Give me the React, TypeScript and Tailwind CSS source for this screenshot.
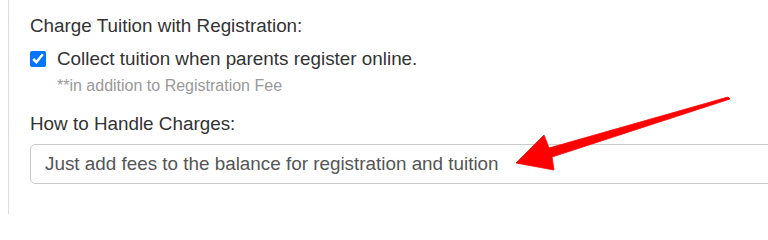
const App = () => {
  return (
    <div className="relative h-[214px] w-[768px] overflow-hidden bg-white font-['Liberation_Sans',Arial,sans-serif]">
      <div className="ml-2 h-full border-l border-[#dddddd] pl-[21px] pt-[13px]">
        <div className="text-[18.85px] leading-[26px] text-[#333333]">Charge Tuition with Registration:</div>

        <label className="mt-[7px] flex items-center gap-[11px] text-[18.85px] leading-[26px] text-[#333333]">
          <input type="checkbox" checked readOnly className="m-0 h-4 w-4 accent-[#0075ff]" />
          <span>Collect tuition when parents register online.</span>
        </label>
        <div className="mt-1 pl-[27px] text-[16px] leading-[20px] text-[#999999]">**in addition to Registration Fee</div>

        <div className="mt-[15px] text-[18.85px] leading-[26px] text-[#333333]">How to Handle Charges:</div>

        <div className="mt-[7px] flex h-[40px] w-[800px] items-center rounded-[5px] border border-[#cccccc] bg-white pl-[14px] text-[18.85px] leading-[26px] text-[#555555]">
          Just add fees to the balance for registration and tuition
        </div>
      </div>

      {/* annotation arrow */}
      <svg className="pointer-events-none absolute left-0 top-0" width="768" height="214" viewBox="0 0 768 214">
        <polygon
          points="516,163 544,135 549,148 728,97 730,99 552,157 554,170"
          fill="#ff0000"
          stroke="#ff0000"
          strokeWidth="0.8"
          strokeLinejoin="round"
        />
      </svg>
    </div>
  );
};

export default App;
